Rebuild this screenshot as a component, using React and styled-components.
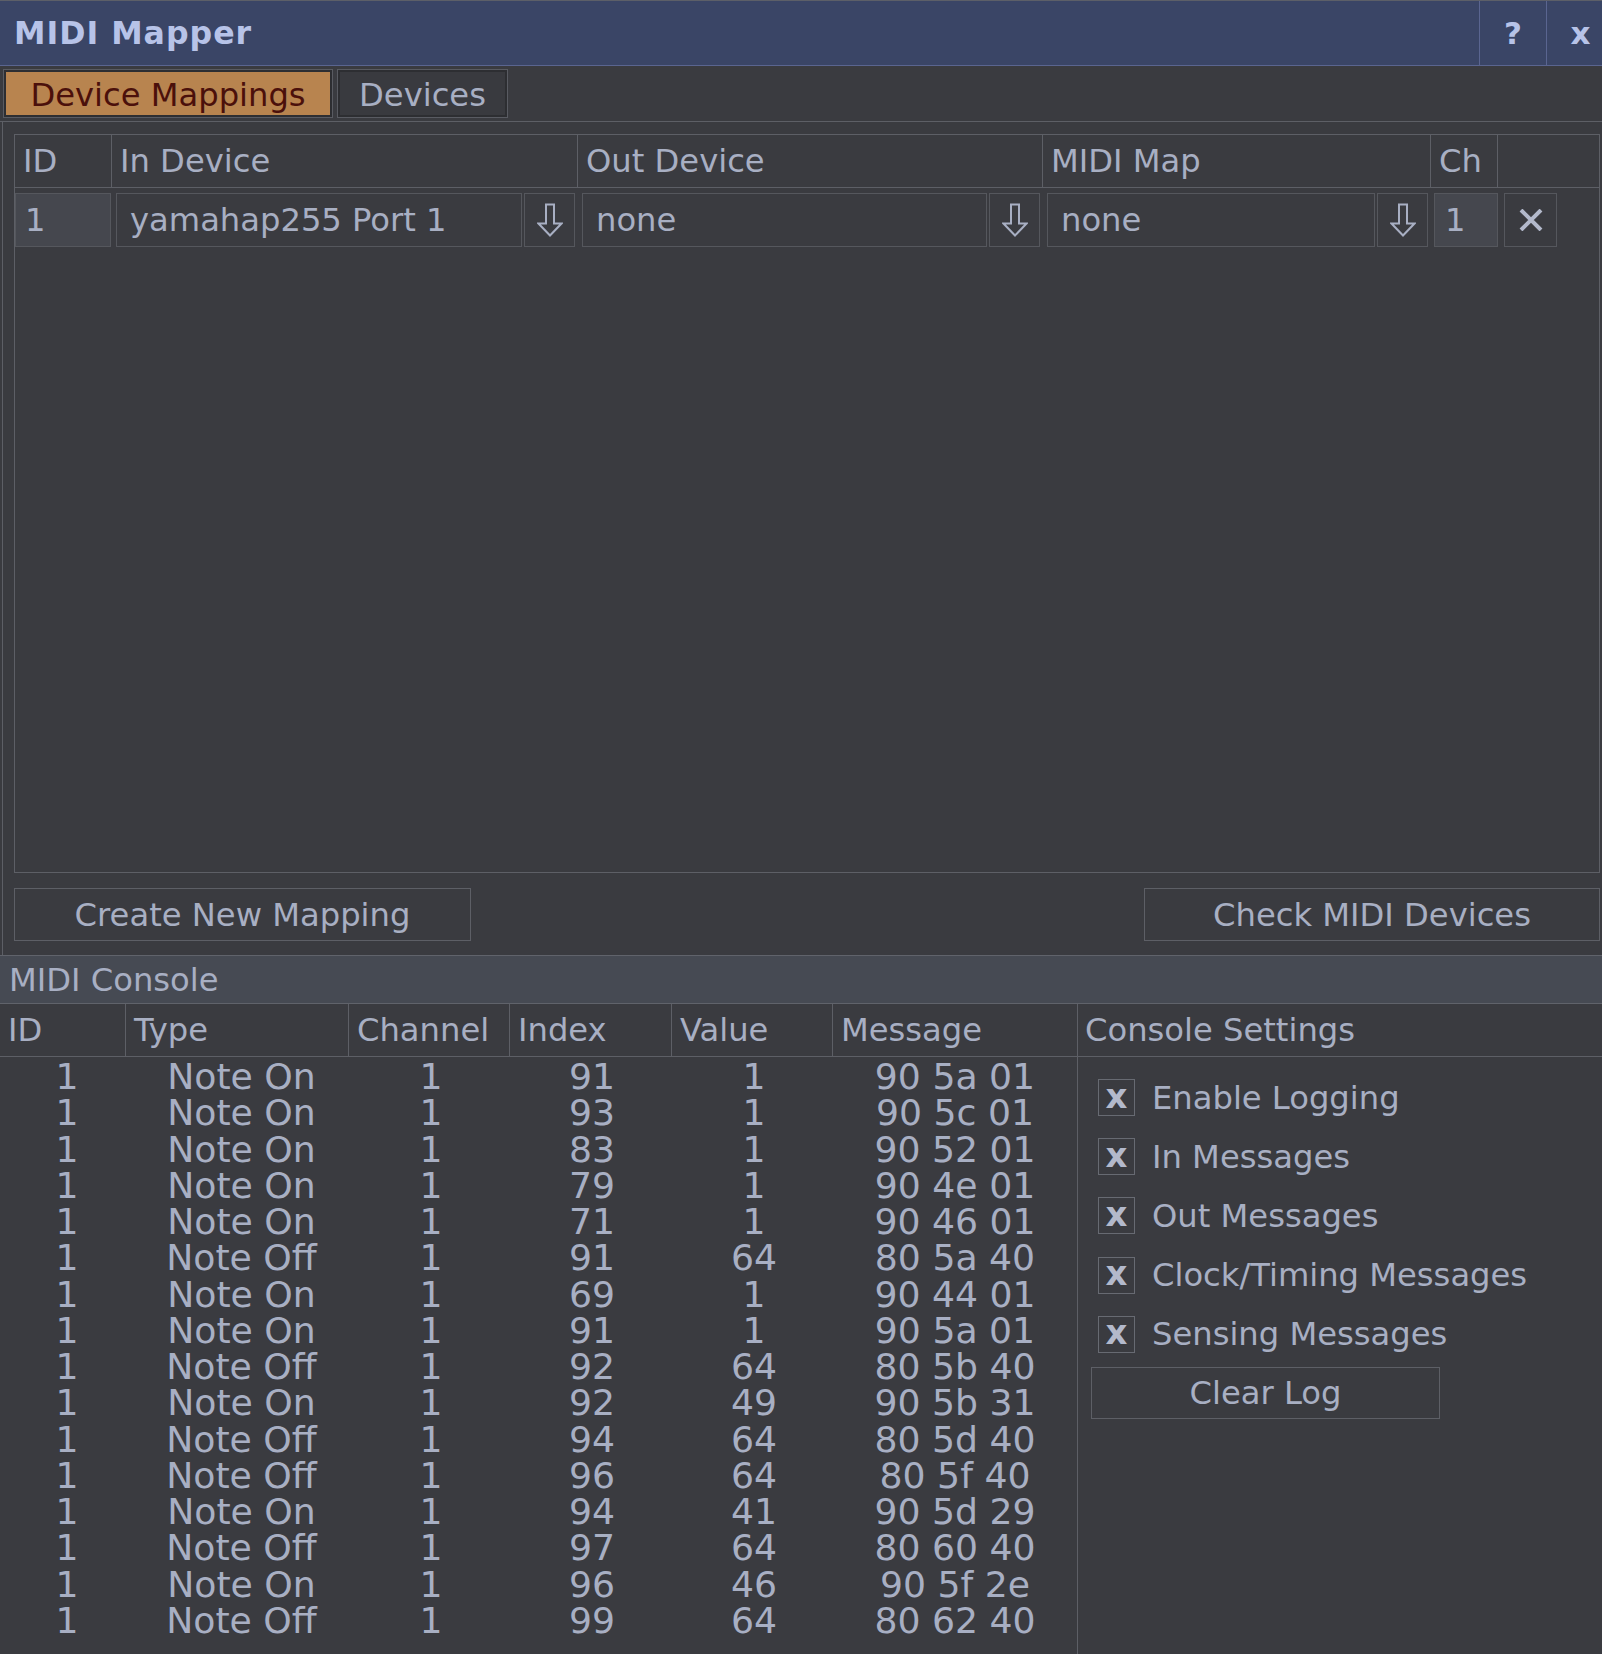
import React from "react";
import styled, { createGlobalStyle } from "styled-components";

const GlobalStyle = createGlobalStyle`
  html, body {
    margin: 0;
    padding: 0;
    background: #3a3b40;
  }
  body {
    font-family: "DejaVu Sans", Verdana, sans-serif;
    font-size: 32.2px;
    color: #a8afc3;
  }
  * {
    box-sizing: border-box;
  }
`;

const logRows = [
  ["1", "Note On", "1", "91", "1", "90 5a 01"],
  ["1", "Note On", "1", "93", "1", "90 5c 01"],
  ["1", "Note On", "1", "83", "1", "90 52 01"],
  ["1", "Note On", "1", "79", "1", "90 4e 01"],
  ["1", "Note On", "1", "71", "1", "90 46 01"],
  ["1", "Note Off", "1", "91", "64", "80 5a 40"],
  ["1", "Note On", "1", "69", "1", "90 44 01"],
  ["1", "Note On", "1", "91", "1", "90 5a 01"],
  ["1", "Note Off", "1", "92", "64", "80 5b 40"],
  ["1", "Note On", "1", "92", "49", "90 5b 31"],
  ["1", "Note Off", "1", "94", "64", "80 5d 40"],
  ["1", "Note Off", "1", "96", "64", "80 5f 40"],
  ["1", "Note On", "1", "94", "41", "90 5d 29"],
  ["1", "Note Off", "1", "97", "64", "80 60 40"],
  ["1", "Note On", "1", "96", "46", "90 5f 2e"],
  ["1", "Note Off", "1", "99", "64", "80 62 40"],
];

const logColumns = ["ID", "Type", "Channel", "Index", "Value", "Message"];
// small nudges so the centred log values sit where the original app drew them
const logShift = [8, 8, 3, 2, 3, 0];

const settings = [
  "Enable Logging",
  "In Messages",
  "Out Messages",
  "Clock/Timing Messages",
  "Sensing Messages",
];

function DownArrow() {
  return (
    <svg width="26" height="34" viewBox="0 0 26 34">
      <path
        d="M9 1.5 H17 V20.5 H24.5 L13 32.5 L1.5 20.5 H9 Z"
        fill="none"
        stroke="#a8afc3"
        strokeWidth="2"
        strokeLinejoin="miter"
      />
    </svg>
  );
}

function Cross() {
  return (
    <svg width="24" height="22" viewBox="0 0 24 22">
      <path d="M2 1 L22 21 M22 1 L2 21" stroke="#b3b9cb" strokeWidth="4" />
    </svg>
  );
}

function DeviceSelect({ value }) {
  return (
    <SelectCell>
      <Field>{value}</Field>
      <ArrowButton>
        <DownArrow />
      </ArrowButton>
    </SelectCell>
  );
}

export default function App() {
  return (
    <Window>
      <GlobalStyle />
      <TitleBar>
        <Title>MIDI Mapper</Title>
        <TitleButton width={67}>?</TitleButton>
        <TitleButton width={56} shift={12}>
          x
        </TitleButton>
      </TitleBar>

      <TabBar>
        <Tab active width={328}>Device Mappings</Tab>
        <Tab width={169}>Devices</Tab>
      </TabBar>

      <TabContent>
        <MappingTable>
          <MappingHeader>
            <HeadCell>ID</HeadCell>
            <HeadCell>In Device</HeadCell>
            <HeadCell>Out Device</HeadCell>
            <HeadCell>MIDI Map</HeadCell>
            <HeadCell>Ch</HeadCell>
            <HeadCell last />
          </MappingHeader>
          <MappingRow>
            <IdBox>1</IdBox>
            <DeviceSelect value="yamahap255 Port 1" />
            <DeviceSelect value="none" />
            <DeviceSelect value="none" />
            <ChCell>
              <ChBox>1</ChBox>
            </ChCell>
            <DeleteCell>
              <DeleteButton>
                <Cross />
              </DeleteButton>
            </DeleteCell>
          </MappingRow>
        </MappingTable>

        <ButtonRow>
          <Button width={457}>Create New Mapping</Button>
          <Button width={456}>Check MIDI Devices</Button>
        </ButtonRow>
      </TabContent>

      <ConsoleTitle>MIDI Console</ConsoleTitle>

      <ConsoleBody>
        <LogPane>
          <LogHeader>
            {logColumns.map((c) => (
              <LogHeadCell key={c}>{c}</LogHeadCell>
            ))}
          </LogHeader>
          <LogList>
            {logRows.map((row, i) => (
              <LogRow key={i}>
                {row.map((v, j) => (
                  <LogCell key={j} shift={logShift[j]}>
                    {v}
                  </LogCell>
                ))}
              </LogRow>
            ))}
          </LogList>
        </LogPane>

        <SettingsPane>
          <SettingsHeader>Console Settings</SettingsHeader>
          <SettingsList>
            {settings.map((s) => (
              <CheckRow key={s}>
                <CheckBox>x</CheckBox>
                <CheckLabel>{s}</CheckLabel>
              </CheckRow>
            ))}
            <ClearButton>Clear Log</ClearButton>
          </SettingsList>
        </SettingsPane>
      </ConsoleBody>
    </Window>
  );
}

const Window = styled.div`
  width: 1602px;
  height: 1654px;
  display: flex;
  flex-direction: column;
  overflow: hidden;
  background: #3a3b40;
`;

const TitleBar = styled.div`
  height: 66px;
  display: flex;
  background: #3a4566;
  border-top: 1px solid #5c5f68;
  border-bottom: 1px solid #5a6590;
`;

const Title = styled.div`
  flex: 1;
  display: flex;
  align-items: center;
  padding-left: 14px;
  font-weight: bold;
  font-size: 31.6px;
  letter-spacing: 1px;
  color: #b7c3e8;
`;

const TitleButton = styled.div`
  width: ${({ width }) => width}px;
  display: flex;
  align-items: center;
  justify-content: center;
  padding-left: ${({ shift }) => shift || 0}px;
  border-left: 1px solid #5a6590;
  font-weight: bold;
  font-size: 31px;
  color: #b7c3e8;
`;

const TabBar = styled.div`
  height: 56px;
  display: flex;
  gap: 6px;
  padding: 4px 0 0 4px;
  border-bottom: 1px solid #5d5f66;
`;

const Tab = styled.div`
  width: ${({ width }) => width}px;
  height: 47px;
  display: flex;
  align-items: center;
  justify-content: center;
  padding-top: 2px;
  border: 2px solid #2d2e32;
  box-shadow: 0 0 0 1px #595b62;
  background: ${({ active }) => (active ? "#b8844f" : "#393a3f")};
  color: ${({ active }) => (active ? "#4b100b" : "#a8afc3")};
`;

const TabContent = styled.div`
  margin-left: 2px;
  border-left: 1px solid #5d5f66;
  padding: 12px 2px 14px 11px;
  display: flex;
  flex-direction: column;
`;

const MappingTable = styled.div`
  height: 739px;
  border: 1px solid #5d5f66;
  display: flex;
  flex-direction: column;
`;

const columns = "97px 466px 465px 388px 67px 1fr";

const MappingHeader = styled.div`
  height: 53px;
  display: grid;
  grid-template-columns: ${columns};
  border-bottom: 1px solid #5d5f66;
`;

const HeadCell = styled.div`
  display: flex;
  align-items: center;
  padding-left: 8px;
  white-space: nowrap;
  border-right: ${({ last }) => (last ? "none" : "1px solid #5d5f66")};
`;

const MappingRow = styled.div`
  margin-top: 5px;
  height: 54px;
  display: grid;
  grid-template-columns: ${columns};
`;

const IdBox = styled.div`
  width: 96px;
  display: flex;
  align-items: center;
  padding-left: 9px;
  background: #45474e;
  border: 1px solid #55575d;
`;

const SelectCell = styled.div`
  display: flex;
  gap: 2px;
  padding: 0 3px 0 4px;
`;

const Field = styled.div`
  flex: 1;
  display: flex;
  align-items: center;
  padding-left: 13px;
  white-space: nowrap;
  border: 1px solid #55575d;
`;

const ArrowButton = styled.div`
  width: 51px;
  display: flex;
  align-items: center;
  justify-content: center;
  border: 1px solid #55575d;
`;

const ChCell = styled.div`
  padding-left: 3px;
  display: flex;
`;

const ChBox = styled.div`
  flex: 1;
  display: flex;
  align-items: center;
  padding-left: 10px;
  background: #45474e;
  border: 1px solid #55575d;
`;

const DeleteCell = styled.div`
  padding-left: 6px;
  display: flex;
`;

const DeleteButton = styled.div`
  width: 53px;
  display: flex;
  align-items: center;
  justify-content: center;
  border: 1px solid #55575d;
`;

const ButtonRow = styled.div`
  margin-top: 15px;
  display: flex;
  justify-content: space-between;
`;

const Button = styled.div`
  width: ${({ width }) => width}px;
  height: 53px;
  display: flex;
  align-items: center;
  justify-content: center;
  white-space: nowrap;
  border: 1px solid #5d5f66;
`;

const ConsoleTitle = styled.div`
  height: 49px;
  display: flex;
  align-items: center;
  padding-left: 9px;
  background: #464a53;
  border-top: 1px solid #60636b;
  border-bottom: 1px solid #60636b;
`;

const ConsoleBody = styled.div`
  flex: 1;
  display: flex;
`;

const LogPane = styled.div`
  width: 1077px;
  display: flex;
  flex-direction: column;
`;

const logColumnsTemplate = "126px 223px 161px 162px 161px 244px";

const LogHeader = styled.div`
  height: 53px;
  display: grid;
  grid-template-columns: ${logColumnsTemplate};
  border-bottom: 1px solid #5d5f66;
`;

const LogHeadCell = styled.div`
  display: flex;
  align-items: center;
  padding-left: 8px;
  white-space: nowrap;
  border-right: 1px solid #5d5f66;

  &:last-child {
    border-right: none;
  }
`;

const LogList = styled.div`
  padding-top: 2px;
`;

const LogRow = styled.div`
  display: grid;
  grid-template-columns: ${logColumnsTemplate};
  height: 36.27px;
  font-size: 36.2px;
  line-height: 36.27px;
`;

const LogCell = styled.div`
  text-align: center;
  white-space: nowrap;
  padding-left: ${({ shift }) => shift}px;
`;

const SettingsPane = styled.div`
  flex: 1;
  border-left: 1px solid #5d5f66;
  display: flex;
  flex-direction: column;
`;

const SettingsHeader = styled.div`
  height: 53px;
  display: flex;
  align-items: center;
  padding-left: 7px;
  border-bottom: 1px solid #5d5f66;
`;

const SettingsList = styled.div`
  display: flex;
  flex-direction: column;
  padding: 22px 0 0 20px;
  gap: 22.2px;
`;

const CheckRow = styled.div`
  display: flex;
  align-items: center;
  height: 37px;
  gap: 17px;
`;

const CheckBox = styled.div`
  width: 37px;
  height: 37px;
  display: flex;
  align-items: center;
  justify-content: center;
  border: 1px solid #676a72;
  font-weight: bold;
  font-size: 34px;
  line-height: 1;
  padding-bottom: 4px;
  color: #b3b9cb;
`;

const CheckLabel = styled.div`
  white-space: nowrap;
`;

const ClearButton = styled.div`
  margin: -8px 0 0 -7px;
  width: 349px;
  height: 52px;
  display: flex;
  align-items: center;
  justify-content: center;
  border: 1px solid #5d5f66;
`;
